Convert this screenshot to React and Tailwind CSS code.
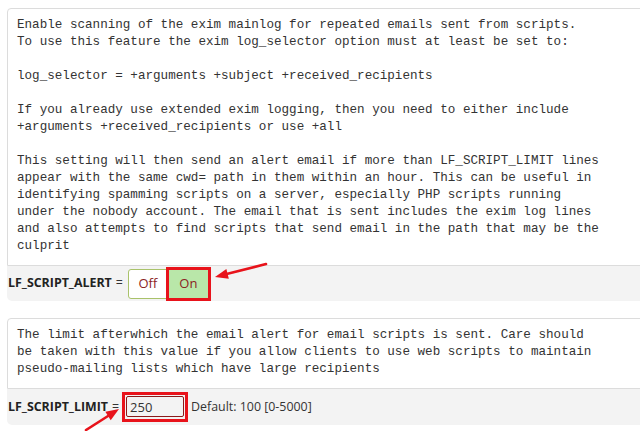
import React from "react";

const mono = { fontFamily: '"Liberation Mono", "Courier New", monospace' };

const Help = ({ lines }) => (
  <div
    className="border border-[#dcdcdc] rounded-t-[4px] bg-white pl-[9px] pt-2 pb-[10px] text-[12.6px] leading-[17px] text-[#333] whitespace-pre"
    style={mono}
  >
    {lines.join("\n")}
  </div>
);

const Arrow = ({ x1, y1, x2, y2 }) => {
  const a = Math.atan2(y2 - y1, x2 - x1);
  const len = 13;
  const w = 5;
  const bx = x2 - len * Math.cos(a);
  const by = y2 - len * Math.sin(a);
  const px = -Math.sin(a) * w;
  const py = Math.cos(a) * w;
  return (
    <g>
      <line x1={x1} y1={y1} x2={bx} y2={by} stroke="#e8131b" strokeWidth="2.6" strokeLinecap="round" />
      <polygon points={`${x2},${y2} ${bx + px},${by + py} ${bx - px},${by - py}`} fill="#e8131b" />
    </g>
  );
};

export default function App() {
  const alertHelp = [
    "Enable scanning of the exim mainlog for repeated emails sent from scripts.",
    "To use this feature the exim log_selector option must at least be set to:",
    "",
    "log_selector = +arguments +subject +received_recipients",
    "",
    "If you already use extended exim logging, then you need to either include",
    "+arguments +received_recipients or use +all",
    "",
    "This setting will then send an alert email if more than LF_SCRIPT_LIMIT lines",
    "appear with the same cwd= path in them within an hour. This can be useful in",
    "identifying spamming scripts on a server, especially PHP scripts running",
    "under the nobody account. The email that is sent includes the exim log lines",
    "and also attempts to find scripts that send email in the path that may be the",
    "culprit",
  ];

  const limitHelp = [
    "The limit afterwhich the email alert for email scripts is sent. Care should",
    "be taken with this value if you allow clients to use web scripts to maintain",
    "pseudo-mailing lists which have large recipients",
  ];

  return (
    <div
      className="relative w-[640px] h-[431px] overflow-hidden bg-white"
      style={{ fontFamily: '"Open Sans", "Liberation Sans", sans-serif' }}
    >
      <div className="w-[720px] ml-[7px] pt-2">
        <Help lines={alertHelp} />
        <div className="h-[35px] bg-[#f3f3f3] rounded-b-[5px] flex items-center pl-px text-[12.4px] text-[#333]">
          <span className="font-bold text-[#222]">LF_SCRIPT_ALERT</span>
          <span className="ml-1">=</span>
          <div className="ml-[5px] flex h-[30px]">
            <button className="w-[40px] h-full bg-white border border-[#a9c26a] rounded-l-[3px] text-[#8b2323] text-[13px]">
              Off
            </button>
            <button className="w-[41px] h-full bg-[#b9e7a9] border border-[#9ccf86] text-[#8b2323] text-[13px] outline-[3px] outline-solid outline-[#e8131b] -outline-offset-1">
              On
            </button>
          </div>
        </div>

        <div className="mt-[17px]">
          <Help lines={limitHelp} />
          <div className="h-[36px] bg-[#f3f3f3] rounded-b-[5px] flex items-center pl-px text-[12.4px] text-[#333]">
            <span className="font-bold text-[#222]">LF_SCRIPT_LIMIT</span>
            <span className="ml-1">=</span>
            <div className="ml-[3px] border-[3px] border-[#e8131b] p-px">
              <input
                defaultValue="250"
                className="w-[58px] h-[21px] border border-[#8b1a1a] rounded-[2px] px-[3px] text-[13px] text-[#333] outline-none"
                style={{ fontFamily: '"Open Sans", sans-serif' }}
              />
            </div>
            <span className="ml-[3px]">Default: 100 [0-5000]</span>
          </div>
        </div>
      </div>

      <svg className="absolute inset-0 pointer-events-none" width="640" height="431">
        <Arrow x1={266} y1={264} x2={215} y2={277} />
        <Arrow x1={86} y1={430} x2={119} y2={409} />
      </svg>
    </div>
  );
}
